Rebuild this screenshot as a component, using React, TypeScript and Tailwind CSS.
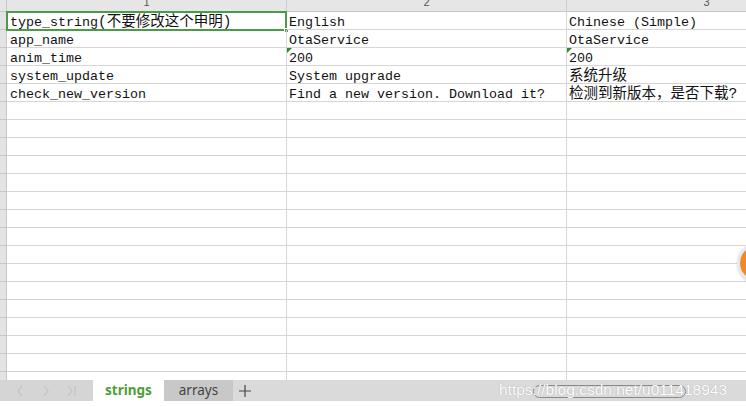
import { FC, ReactNode } from "react";

type Cell = { text: ReactNode; flag?: boolean };

const rows: Cell[][] = [
  [
    { text: <>type_string<span className="text-[14.5px]">(不要修改这个申明)</span></> },
    { text: "English" },
    { text: "Chinese (Simple)" },
  ],
  [{ text: "app_name" }, { text: "OtaService" }, { text: "OtaService" }],
  [{ text: "anim_time" }, { text: "200", flag: true }, { text: "200", flag: true }],
  [
    { text: "system_update" },
    { text: "System upgrade" },
    { text: <span className="text-[14.5px]">系统升级</span> },
  ],
  [
    { text: "check_new_version" },
    { text: "Find a new version. Download it?" },
    { text: <span className="text-[14.5px]">检测到新版本，是否下载?</span> },
  ],
];

const TOTAL_ROWS = 21;
const mono = { fontFamily: '"Liberation Mono", "Noto Sans CJK SC", monospace' };

const Row: FC<{ cells?: Cell[]; selected?: boolean }> = ({ cells, selected }) => (
  <div className="flex h-[18px] shrink-0">
    <div className="w-[7px] shrink-0 bg-[#e3e3e3] border-r border-b border-[#c6c6c6]" />
    {[0, 1, 2].map((i) => {
      const cell = cells?.[i];
      return (
        <div
          key={i}
          className={`relative w-[280px] shrink-0 border-r border-b border-[#d6d6d6] text-[13.33px] leading-[21px] text-[#111] whitespace-nowrap ${
            i === 0 ? "pl-[3px]" : "pl-[2px]"
          } ${i === 2 ? "overflow-hidden" : "overflow-visible"}`}
          style={mono}
        >
          {cell?.flag && (
            <span className="absolute left-0 top-0 w-0 h-0 border-t-[5px] border-r-[5px] border-t-[#2e8b2e] border-r-transparent" />
          )}
          {cell?.text}
          {selected && i === 0 && (
            <>
              <span className="absolute -left-px -top-px w-[281px] h-[20px] border-[2.5px] border-[#4a9a4a]" />
              <span className="absolute right-[-3px] bottom-[-4px] w-[5px] h-[5px] bg-[#4a9a4a] border border-white" />
            </>
          )}
        </div>
      );
    })}
  </div>
);

export default function App() {
  return (
    <div className="relative w-[746px] h-[407px] overflow-hidden bg-white">
      {/* sheet area */}
      <div className="h-[380px] overflow-hidden">
        <div className="flex h-[12px] bg-[#e6e6e6] border-b border-[#c6c6c6]">
          <div className="w-[7px] shrink-0 border-r border-[#c6c6c6]" />
          {["1", "2", "3"].map((n) => (
            <div
              key={n}
              className="w-[280px] shrink-0 border-r border-[#cfcfcf] overflow-hidden flex justify-center items-end pb-[3px] text-[11px] leading-[11px] text-[#555]"
              style={{ fontFamily: '"Liberation Sans", sans-serif' }}
            >
              {n}
            </div>
          ))}
        </div>
        {Array.from({ length: TOTAL_ROWS }).map((_, r) => (
          <Row key={r} cells={rows[r]} selected={r === 0} />
        ))}
      </div>

      {/* sheet tabs */}
      <div
        className="flex h-[21px] bg-[#dadada] items-stretch"
        style={{ fontFamily: '"Noto Sans", "Noto Sans CJK SC", sans-serif' }}
      >
        <div className="w-[93px] shrink-0 bg-[#d5d5d5] flex items-center">
          <svg className="ml-[15px]" width="10" height="14" viewBox="0 0 10 14">
            <path d="M7 2 3 7l4 5" fill="none" stroke="#c2c2c2" strokeWidth="1.2" />
          </svg>
          <svg className="ml-[16px]" width="10" height="14" viewBox="0 0 10 14">
            <path d="M3 2l4 5-4 5" fill="none" stroke="#c2c2c2" strokeWidth="1.2" />
          </svg>
          <svg className="ml-[15px]" width="12" height="14" viewBox="0 0 12 14">
            <path d="M2 2l4 5-4 5M9 2v10" fill="none" stroke="#c2c2c2" strokeWidth="1.2" />
          </svg>
        </div>
        <div className="w-[71px] shrink-0 bg-white flex items-center justify-center text-[13.5px] font-bold text-[#4c9f38]">
          strings
        </div>
        <div className="w-[69px] shrink-0 bg-[#c8c8c8] flex items-center justify-center text-[13.5px] text-[#444]">
          arrays
        </div>
        <div className="w-[24px] flex items-center justify-center">
          <svg width="14" height="14" viewBox="0 0 14 14">
            <path d="M7 1v12M1 7h12" stroke="#444" strokeWidth="1.2" />
          </svg>
        </div>
      </div>

      {/* scrollbar pill and watermark */}
      <div className="absolute left-[533px] top-[385px] w-[153px] h-[13px] rounded-full border border-[#8a8a8a]" />
      <div
        className="absolute left-[499px] top-[380px] text-[15.5px] leading-[20px] text-white"
        style={{ fontFamily: '"Liberation Sans", sans-serif', textShadow: "0 0 1px #9a9a9a" }}
      >
        https://blog.csdn.net/u011418943
      </div>

      {/* floating orange button */}
      <div className="absolute left-[737px] top-[243px] w-[40px] h-[40px] rounded-full bg-[#f0892a] border-[3px] border-[#e8e8e8] shadow" />
    </div>
  );
}
